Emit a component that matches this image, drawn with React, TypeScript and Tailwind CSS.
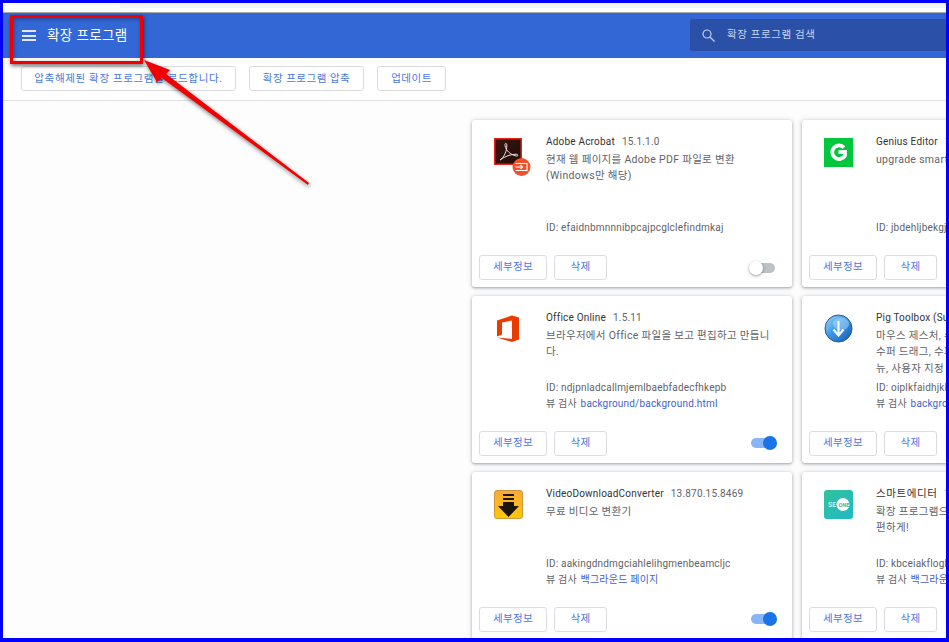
import React from "react";

function AdobeIcon() {
  return (
    <svg width="38" height="38" viewBox="0 0 38 38">
      <defs>
        <linearGradient id="ab" x1="0" y1="0" x2="1" y2="1">
          <stop offset="0" stopColor="#3a1510" />
          <stop offset="1" stopColor="#1f0b09" />
        </linearGradient>
      </defs>
      <rect x="0" y="0" width="28" height="27" fill="#e2231a" />
      <rect x="1.500" y="1.500" width="25" height="24" fill="url(#ab)" />
      <path d="M6 22c4-2.500 7-9 6.800-15-.1-2.500-2.300-2-1.800.5 1 5 5 9 11 10.500 2.500.6 2.700-1.800 0-1.800-5 0-11 2-16 5.800z" fill="none" stroke="#eadfda" strokeWidth="1" />
      <circle cx="27.500" cy="29" r="9" fill="#f0512b" />
      <path d="M21.500 25.500h11.500v7h-11.500M21.500 29h7M26.500 27l2 2-2 2" fill="none" stroke="#fff" strokeWidth="1.100" />
    </svg>
  );
}
function GIcon() {
  return (
    <svg width="29" height="29" viewBox="0 0 29 29">
      <rect width="29" height="29" fill="#00c73c" />
      <path d="M20 9.500a6.800 6.800 0 1 0 1 8v-3.500h-6.500" fill="none" stroke="#fff" strokeWidth="3.800" />
    </svg>
  );
}
function OfficeIcon() {
  return (
    <svg width="29" height="29" viewBox="0 0 29 29">
      <path d="M3 6.500 18 1.500l7 2v22l-7 2.500-15-4.500 15 1.500V6.500L8 8.500v12l-5 2z" fill="#eb3c00" />
    </svg>
  );
}
function PigIcon() {
  return (
    <svg width="29" height="29" viewBox="0 0 29 29">
      <defs>
        <linearGradient id="pg" x1="0" y1="0" x2="1" y2="1">
          <stop offset="0" stopColor="#a8dcf8" />
          <stop offset="0.45" stopColor="#3a9ae8" />
          <stop offset="1" stopColor="#1556b0" />
        </linearGradient>
      </defs>
      <circle cx="14.500" cy="14.500" r="13.500" fill="url(#pg)" stroke="#24579f" strokeWidth="1" />
      <ellipse cx="17" cy="10" rx="8" ry="6.500" fill="#bfe6fb" opacity="0.45" />
      <path d="M14.500 7v14M9.500 15.500l5 6 5-6" fill="none" stroke="#f4f8fb" strokeWidth="2.200" />
    </svg>
  );
}
function VideoIcon() {
  return (
    <svg width="29" height="29" viewBox="0 0 29 29">
      <defs>
        <linearGradient id="vg" x1="0" y1="0" x2="0" y2="1">
          <stop offset="0" stopColor="#f9a93a" />
          <stop offset="1" stopColor="#ffc800" />
        </linearGradient>
      </defs>
      <rect x="0.500" y="0.500" width="28" height="28" rx="2.500" fill="url(#vg)" stroke="#b9791a" strokeWidth="0.700" />
      <path d="M9 4h11v2H9zM9 8h11v2H9zM9 12h11v4h5L14.500 27 4 16h5z" fill="#1c1408" />
    </svg>
  );
}
function SeIcon() {
  return (
    <div className="w-[29px] h-[29px] rounded-[3px] bg-gradient-to-br from-[#33c29a] to-[#20b8c8] flex items-center justify-center">
      <svg width="29" height="29" viewBox="0 0 29 29">
        <circle cx="19" cy="14.500" r="6.500" fill="#fff" />
        <text x="4" y="17" fontSize="7" fontFamily="Roboto, sans-serif" fontWeight="500" fill="#d8f5ee">SE</text>
        <text x="14.500" y="16.500" fontSize="5.500" fontFamily="Roboto, sans-serif" fontWeight="700" fill="#2cbda6">ONE</text>
      </svg>
    </div>
  );
}

function Toggle({ on }: { on: boolean }) {
  return on ? (
    <div className="relative w-[25px] h-[10px] rounded-full bg-[#8ab4f8] mr-[16px] mb-[1px]">
      <div className="absolute right-[-1px] top-[-2px] w-[14px] h-[14px] rounded-full bg-[#1a73e8]" />
    </div>
  ) : (
    <div className="relative w-[25px] h-[10px] rounded-full bg-[#bdc1c6] mr-[17px]">
      <div className="absolute left-[-1px] top-[-2px] w-[14px] h-[14px] rounded-full bg-white shadow-[0_1px_3px_rgba(0,0,0,0.4)]" />
    </div>
  );
}

type Ext = {
  icon: React.ReactNode;
  name: string;
  nameClass?: string;
  version: string;
  desc: string[];
  id: string;
  link?: string;
  on?: boolean;
};

function Card({ e }: { e: Ext }) {
  return (
    <div className="w-[320px] h-[167px] shrink-0 rounded-[3px] bg-white shadow-[0_1px_3px_rgba(60,64,67,0.45),0_0_6px_rgba(60,64,67,0.12)] flex flex-col">
      <div className="flex-1 flex min-h-0 pl-[22px] pt-[18px] pr-[14px] pb-[19px]">
        <div className="w-[52px] shrink-0">{e.icon}</div>
        <div className="flex-1 min-w-0 flex flex-col">
          <div className="text-[10px] leading-[13px] mt-[-3px] text-[#333] whitespace-nowrap tracking-[0.2px]">
            <span className={e.nameClass}>{e.name}</span>
            <span className="ml-[7px] text-[#5f6368]">{e.version}</span>
          </div>
          <div className="mt-[4px] text-[10.500px] leading-[16.300px] text-[#5f6368] tracking-[0.3px] whitespace-nowrap">
            {e.desc.map((d) => (
              <div key={d}>{d}</div>
            ))}
          </div>
          <div className="mt-auto text-[10px] leading-[16px] text-[#5f6368] whitespace-nowrap tracking-[0.2px]">
            <div>ID: {e.id}</div>
            {e.link && (
              <div>
                뷰 검사 <span className="ml-[1px] text-[#3f5fc8]">{e.link}</span>
              </div>
            )}
          </div>
        </div>
      </div>
      <div className="flex items-center justify-between pl-[7px] h-[25px] mb-[7px]">
        <div className="flex gap-[7px]">
          <button className="w-[68px] h-[25px] pb-[2px] rounded-[3px] border border-[#dadce0] bg-white text-[10.500px] text-[#4a78e0] tracking-[0.3px]">세부정보</button>
          <button className="w-[53px] h-[25px] pb-[2px] rounded-[3px] border border-[#dadce0] bg-white text-[10.500px] text-[#4a78e0] tracking-[0.3px]">삭제</button>
        </div>
        <Toggle on={!!e.on} />
      </div>
    </div>
  );
}

const left: Ext[] = [
  { icon: <AdobeIcon />, name: "Adobe Acrobat", version: "15.1.1.0", desc: ["현재 웹 페이지를 Adobe PDF 파일로 변환", "(Windows만 해당)"], id: "efaidnbmnnnibpcajpcglclefindmkaj" },
  { icon: <OfficeIcon />, name: "Office Online", version: "1.5.11", desc: ["브라우저에서 Office 파일을 보고 편집하고 만듭니", "다."], id: "ndjpnladcallmjemlbaebfadecfhkepb", link: "background/background.html", on: true },
  { icon: <VideoIcon />, name: "VideoDownloadConverter", version: "13.870.15.8469", desc: ["무료 비디오 변환기"], id: "aakingdndmgciahlelihgmenbeamcljc", link: "백그라운드 페이지", on: true },
];
const right: Ext[] = [
  { icon: <GIcon />, name: "Genius Editor", version: "1.0.0", desc: ["upgrade smart editor"], id: "jbdehljbekgjdhfnoaegd", on: true },
  { icon: <PigIcon />, name: "Pig Toolbox (Super Drag)", version: "1.0", desc: ["마우스 제스처, 슈퍼 드래그", "수퍼 드래그, 수퍼 메뉴", "뉴, 사용자 지정 메뉴"], id: "oiplkfaidhjklmnopqrst", link: "background", on: true },
  { icon: <SeIcon />, name: "스마트에디터", nameClass: "text-[10.500px] tracking-[0.6px]", version: "1.0", desc: ["확장 프로그램으로 더 간", "편하게!"], id: "kbceiakflogbdefghijkl", link: "백그라운드 페이지", on: true },
];

export default function App() {
  return (
    <div className="relative w-[949px] h-[642px] overflow-hidden bg-white font-['Roboto','Noto_Sans_CJK_KR',sans-serif]">
      <div className="h-[3px] bg-[#0000ff]" />
      <div className="h-[5px] flex">
        <div className="w-[117px] ml-[3px] bg-white" />
        <div className="flex-1 bg-[#f3f4f6]" />
      </div>
      <div className="h-[4px] bg-white" />
      <div className="h-[1px] bg-[#a8a8a8]" />
      <header className="h-[45px] bg-[#3367d6] flex items-center justify-between pl-[22px]">
        <div className="flex items-center">
          <div className="w-[14px] flex flex-col gap-[2.500px]">
            <div className="h-[2px] bg-[#e3e9f8]" />
            <div className="h-[2px] bg-[#e3e9f8]" />
            <div className="h-[2px] bg-[#e3e9f8]" />
          </div>
          <div className="ml-[11px] text-[13.500px] text-white tracking-[0.4px]">확장 프로그램</div>
        </div>
        <div className="w-[259px] h-[32px] mb-[1px] rounded-[2px] bg-[#2a50a8] flex items-center pl-[12px]">
          <svg width="13" height="13" viewBox="0 0 13 13" fill="none" stroke="#c3cfe8" strokeWidth="1.200">
            <circle cx="5" cy="5" r="4" />
            <path d="M8 8l4.500 4.500" />
          </svg>
          <span className="ml-[12px] text-[10.500px] text-[#c9d5f0] tracking-[0.6px]">확장 프로그램 검색</span>
        </div>
      </header>
      <div className="h-[43px] border-b border-[#e0e0e0] bg-white flex items-center gap-[13px] pl-[21px] pb-[1px]">
        <button className="w-[215px] h-[25px] rounded-[3px] border border-[#dadce0] bg-white text-[10.500px] text-[#4a78e0] tracking-[0.65px]">압축해제된 확장 프로그램을 로드합니다.</button>
        <button className="w-[115px] h-[25px] rounded-[3px] border border-[#dadce0] bg-white text-[10.500px] text-[#4a78e0] tracking-[0.5px]">확장 프로그램 압축</button>
        <button className="w-[69px] h-[25px] rounded-[3px] border border-[#dadce0] bg-white text-[10.500px] text-[#4a78e0] tracking-[0.5px]">업데이트</button>
      </div>
      <main className="bg-[#fdfdfe] h-[541px] flex gap-[10px] pl-[472px] pt-[19px]">
        <div className="flex flex-col gap-[9px] shrink-0">
          {left.map((e) => <Card key={e.name} e={e} />)}
        </div>
        <div className="flex flex-col gap-[9px] shrink-0">
          {right.map((e) => <Card key={e.name} e={e} />)}
        </div>
      </main>

      {/* screenshot annotations */}
      <div className="absolute left-[10px] top-[15px] w-[133px] h-[49px] border-[3px] border-[#f00000] shadow-[1px_2px_4px_rgba(0,0,0,0.55),inset_1px_1px_4px_rgba(0,0,0,0.35)]" />
      <svg className="absolute left-0 top-0 drop-shadow-[1px_2px_2px_rgba(0,0,0,0.55)]" width="949" height="642" viewBox="0 0 949 642">
        <polygon points="144,60 170,70 166,74 309,183 308,185 162,78 157,82" fill="#f00000" />
      </svg>
      <div className="absolute left-0 top-0 w-[3px] h-[642px] bg-[#0000ff]" />
      <div className="absolute right-0 top-0 w-[3px] h-[642px] bg-[#0000ff]" />
      <div className="absolute left-0 bottom-0 w-[949px] h-[4px] bg-[#0000ff]" />
    </div>
  );
}
